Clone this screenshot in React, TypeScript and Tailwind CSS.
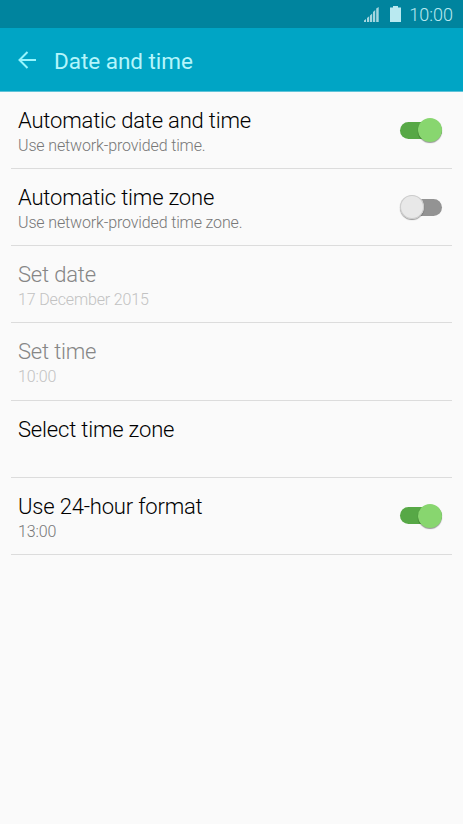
import React, { useState } from 'react';

interface Setting {
  id: string;
  title: string;
  summary?: string;
  disabled?: boolean;
  hasSwitch?: boolean;
}

const settings: Setting[] = [
  { id: 'auto-time', title: 'Automatic date and time', summary: 'Use network-provided time.', hasSwitch: true },
  { id: 'auto-zone', title: 'Automatic time zone', summary: 'Use network-provided time zone.', hasSwitch: true },
  { id: 'date', title: 'Set date', summary: '17 December 2015', disabled: true },
  { id: 'time', title: 'Set time', summary: '10:00', disabled: true },
  { id: 'zone', title: 'Select time zone' },
  { id: 'format', title: 'Use 24-hour format', summary: '13:00', hasSwitch: true },
];

const SignalIcon = () => (
  <svg className="h-[15px] w-[15px]" viewBox="0 0 15 15" fill="#a5d6df" aria-hidden="true">
    <path d="M0 15v-1.5l2-1.5v3zM3 15v-4l2.2-1.7V15zM6 15V8.5l2.2-2V15zM9 15V5l2.2-2v12zM12.2 15V1.6L14.7 0v15z" />
  </svg>
);

const BatteryIcon = () => (
  <svg className="h-4 w-[11px]" viewBox="0 0 11 16" fill="#b9e9f0" aria-hidden="true">
    <path d="M3 0h5v1.5h3V16H0V1.5h3z" />
  </svg>
);

const BackIcon = () => (
  <svg className="h-[18px] w-[18px]" viewBox="0 0 18 18" fill="none" stroke="#97f5fd" strokeWidth="2" aria-hidden="true">
    <path d="M18 9H1.5M9.5 1L1.5 9l8 8" />
  </svg>
);

interface ToggleProps {
  label: string;
  on: boolean;
  onToggle: () => void;
}

const Toggle: React.FC<ToggleProps> = ({ label, on, onToggle }) => (
  <button
    type="button"
    role="switch"
    aria-checked={on}
    aria-label={label}
    onClick={onToggle}
    className={`flex h-6 w-[42px] shrink-0 items-center ${on ? 'justify-end' : 'justify-start'}`}
  >
    <span className={`h-[17px] rounded-full ${on ? '-mr-6 w-[42px] bg-[#57a846]' : 'order-2 -ml-6 w-[42px] bg-[#939393]'} shrink-0`} />
    <span
      className={`relative size-6 shrink-0 rounded-full shadow-[0_1px_1px_rgba(0,0,0,0.4)] ${
        on ? 'bg-[#88d66f]' : 'bg-[#e8e8e8] ring-1 ring-inset ring-[#cccccc]'
      }`}
    />
  </button>
);

const App: React.FC = () => {
  const [enabled, setEnabled] = useState<{ [id: string]: boolean }>({ 'auto-time': true, format: true });

  return (
    <div className="flex min-h-screen w-full flex-col bg-[#fafafa] font-[Roboto,sans-serif]">
      <div className="flex h-7 items-center justify-end bg-[#00849e] pr-[10px] text-[#b9e9f0]">
        <SignalIcon />
        <span className="ml-[11px] -mt-[1px]">
          <BatteryIcon />
        </span>
        <span className="ml-2 mt-[2px] text-[18px] leading-6 font-light">10:00</span>
      </div>

      <header className="flex h-16 items-center border-b border-[#5fc3d8] bg-[#00a5c5] pl-[18px]">
        <button type="button" aria-label="Back">
          <BackIcon />
        </button>
        <h1 className="mt-[2px] ml-[18px] text-[22.5px] leading-7 tracking-[-0.04px] text-[#b5f5fb]">Date and time</h1>
      </header>

      <ul className="px-[11px]">
        {settings.map(({ id, title, summary, disabled, hasSwitch }) => (
          <li key={id} className="flex h-[77.15px] justify-between border-b border-[#dcdcdc] pr-[10px] pl-[7px]">
            <div className="pt-[15px]">
              <div className={`text-[22px] leading-7 font-light tracking-[-0.18px] ${disabled ? 'text-[#868686]' : 'text-black'}`}>
                {title}
              </div>
              {summary && (
                <div
                  className={`text-[16px] leading-[22px] font-light tracking-[-0.14px] ${disabled ? 'text-[#c2c2c2]' : 'text-[#777777]'}`}
                >
                  {summary}
                </div>
              )}
            </div>
            {hasSwitch && (
              <div className="flex items-center">
                <Toggle
                  label={title}
                  on={!!enabled[id]}
                  onToggle={() => setEnabled((prev) => ({ ...prev, [id]: !prev[id] }))}
                />
              </div>
            )}
          </li>
        ))}
      </ul>
    </div>
  );
};

export default App;
